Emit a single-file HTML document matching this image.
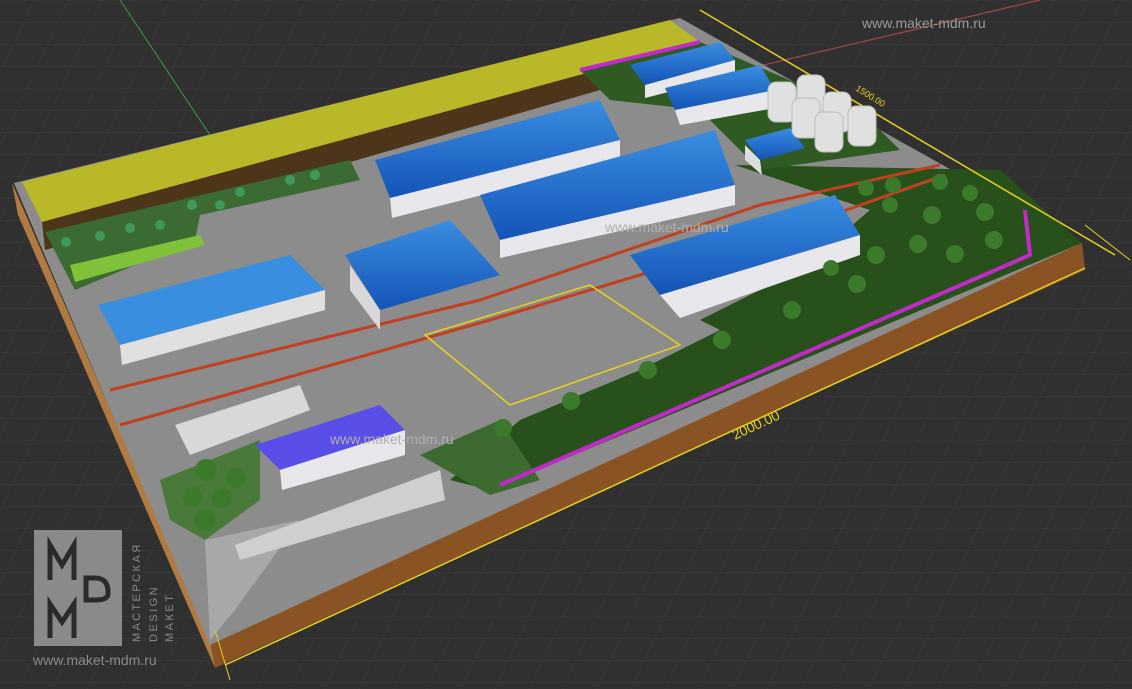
<!DOCTYPE html>
<html><head><meta charset="utf-8"><style>
html,body{margin:0;padding:0;background:#333;}
svg{display:block}
text{font-family:"Liberation Sans",sans-serif}
</style></head><body>
<svg width="1132" height="689" viewBox="0 0 1132 689" xmlns="http://www.w3.org/2000/svg">
<defs>
<pattern id="g" width="34" height="22" patternUnits="userSpaceOnUse" patternTransform="skewX(-25)">
<path d="M0 0H34M0 0V22" stroke="#3d3d3d" stroke-width="1" fill="none"/>
</pattern>
<linearGradient id="roof" x1="0" y1="0" x2="0" y2="1"><stop offset="0" stop-color="#3a8ee0"/><stop offset="1" stop-color="#1454b8"/></linearGradient>
</defs>
<rect width="1132" height="689" fill="#303030"/>
<rect width="1132" height="689" fill="url(#g)"/>
<line x1="120" y1="0" x2="210" y2="135" stroke="#3c9a3c" stroke-width="1"/>
<line x1="700" y1="80" x2="1040" y2="0" stroke="#a04848" stroke-width="1.2"/>
<polygon points="210,640 1082,243 1085,270 215,668" fill="#8a5324"/>
<polygon points="12,183 210,640 215,668 18,215" fill="#b07a40"/>
<polygon points="14,183 680,18 1082,243 210,645" fill="#8c8c8c"/>
<polygon points="22,182 670,20 700,42 42,222" fill="#b8b828"/>
<polygon points="42,222 700,42 712,50 600,90 45,250" fill="#4d3519"/>
<polygon points="45,232 350,160 360,180 200,215 195,240 75,290" fill="#3c6a33"/>
<polygon points="70,265 200,235 205,245 75,282" fill="#7fc23a"/>
<polygon points="735,165 1000,170 1082,243 490,490 450,480 520,420 640,370 720,330 700,320 800,270 870,210" fill="#27501a"/>
<polygon points="580,70 700,42 860,110 900,150 760,170 700,110 610,100" fill="#2f5a22"/>
<polygon points="420,455 500,420 540,480 490,495" fill="#3d6a30"/>
<polygon points="160,480 260,440 260,500 205,540 170,520" fill="#4a7a3a"/>
<polygon points="205,540 300,520 235,610 210,640" fill="#a8a8a8"/>
<polyline points="500,485 1030,255 1025,210" stroke="#c02ac8" stroke-width="4" fill="none"/>
<polyline points="580,70 700,42" stroke="#c02ac8" stroke-width="4" fill="none"/>
<polyline points="225,665 1085,268" stroke="#e6d21e" stroke-width="1.5" fill="none"/>
<polyline points="700,10 1115,255" stroke="#e6d21e" stroke-width="1.5" fill="none"/>
<line x1="1085" y1="225" x2="1130" y2="260" stroke="#e6d21e"/>
<line x1="215" y1="630" x2="230" y2="680" stroke="#e6d21e"/>
<text x="735" y="440" fill="#e6d21e" font-size="14" transform="rotate(-25 735 440)">2000.00</text>
<text x="855" y="90" fill="#e6d21e" font-size="9" transform="rotate(32 855 90)">1500.00</text>
<polyline points="110,390 480,300 760,205 940,165" stroke="#c04020" stroke-width="3" fill="none"/>
<polyline points="120,425 490,320 790,230 945,175" stroke="#c04020" stroke-width="3" fill="none"/>
<g>
<polygon points="375,160 600,100 620,140 390,198" fill="url(#roof)"/>
<polygon points="390,198 620,140 620,160 392,218" fill="#e8e8ec"/>
<polygon points="480,195 715,130 735,185 500,240" fill="url(#roof)"/>
<polygon points="500,240 735,185 735,205 500,258" fill="#e8e8ec"/>
<polygon points="630,255 835,195 860,235 660,295" fill="url(#roof)"/>
<polygon points="660,295 860,235 860,255 680,318" fill="#e8e8ec"/>
<polygon points="345,255 450,220 500,275 380,310" fill="url(#roof)"/>
<polygon points="350,265 380,310 380,330 350,290" fill="#d8d8d8"/>
<polygon points="98,305 290,255 325,290 120,345" fill="#3a8ee0"/>
<polygon points="120,345 325,290 325,310 122,365" fill="#e0e0e0"/>
<polygon points="630,65 720,42 735,60 645,85" fill="url(#roof)"/>
<polygon points="645,85 735,60 735,75 645,98" fill="#e8e8ec"/>
<polygon points="665,88 760,65 775,90 675,110" fill="url(#roof)"/>
<polygon points="675,110 775,90 775,108 680,125" fill="#e8e8ec"/>
<polygon points="745,140 790,128 805,148 760,160" fill="url(#roof)"/>
<polygon points="745,145 760,160 762,175 745,160" fill="#ddd"/>
<polygon points="255,445 380,405 405,430 280,470" fill="#5a4ee8"/>
<polygon points="280,470 405,430 405,455 282,490" fill="#e8e8ec"/>
</g>
<g fill="#e0e0e0" stroke="#bbb">
<rect x="768" y="82" width="28" height="40" rx="8"/><rect x="797" y="75" width="28" height="40" rx="8"/>
<rect x="792" y="98" width="28" height="40" rx="8"/><rect x="823" y="92" width="28" height="40" rx="8"/>
<rect x="815" y="112" width="28" height="40" rx="8"/><rect x="848" y="106" width="28" height="40" rx="8"/>
</g>
<polygon points="175,425 300,385 310,410 190,455" fill="#d8d8d8"/>
<polygon points="235,545 440,470 445,500 240,560" fill="#cfcfcf"/>
<polygon points="425,335 590,285 680,345 510,405" fill="none" stroke="#e6d21e" stroke-width="1.5"/>
<g fill="#3b7a2a">
<circle cx="206" cy="470" r="11"/><circle cx="236" cy="478" r="10"/><circle cx="193" cy="497" r="10"/><circle cx="222" cy="498" r="10"/><circle cx="205" cy="520" r="11"/>
<circle cx="503" cy="428" r="9"/><circle cx="571" cy="401" r="9"/><circle cx="648" cy="370" r="9"/><circle cx="722" cy="340" r="9"/>
<circle cx="792" cy="310" r="9"/><circle cx="857" cy="284" r="9"/><circle cx="876" cy="255" r="9"/><circle cx="831" cy="268" r="8"/>
<circle cx="918" cy="244" r="9"/><circle cx="955" cy="254" r="9"/><circle cx="994" cy="240" r="9"/><circle cx="985" cy="212" r="9"/>
<circle cx="932" cy="215" r="9"/><circle cx="890" cy="205" r="8"/><circle cx="866" cy="188" r="8"/><circle cx="940" cy="182" r="8"/><circle cx="970" cy="193" r="8"/><circle cx="893" cy="185" r="8"/>
</g>
<g fill="#3d9a5a"><circle cx="66" cy="242" r="5"/><circle cx="100" cy="236" r="5"/><circle cx="130" cy="228" r="5"/><circle cx="160" cy="225" r="5"/><circle cx="192" cy="205" r="5"/><circle cx="220" cy="205" r="5"/><circle cx="240" cy="192" r="5"/><circle cx="290" cy="180" r="5"/><circle cx="315" cy="175" r="5"/></g>
<text x="862" y="28" fill="#9a9a9a" font-size="14">www.maket-mdm.ru</text>
<text x="605" y="232" fill="#b0b0b0" font-size="14">www.maket-mdm.ru</text>
<text x="330" y="444" fill="#b0b0b0" font-size="14">www.maket-mdm.ru</text>
<rect x="34" y="530" width="88" height="116" fill="#8a8a8a"/>
<g fill="none" stroke="#2a2a2a" stroke-width="5">
<polyline points="50,580 50,545 62,565 74,545 74,580"/>
<path d="M86 578 H95 Q108 578 108 592 V594 Q108 600 95 600 H86 Z"/>
<polyline points="50,638 50,604 62,622 74,604 74,638"/>
</g>
<text transform="translate(140 642) rotate(-90)" fill="#8a8a8a" font-size="11" letter-spacing="2.5">МАСТЕРСКАЯ</text>
<text transform="translate(157 642) rotate(-90)" fill="#8a8a8a" font-size="11" letter-spacing="2.5">DESIGN</text>
<text transform="translate(173 642) rotate(-90)" fill="#8a8a8a" font-size="11" letter-spacing="2.5">МАКЕТ</text>
<text x="33" y="665" fill="#8a8a8a" font-size="14">www.maket-mdm.ru</text>
</svg>
</body></html>
